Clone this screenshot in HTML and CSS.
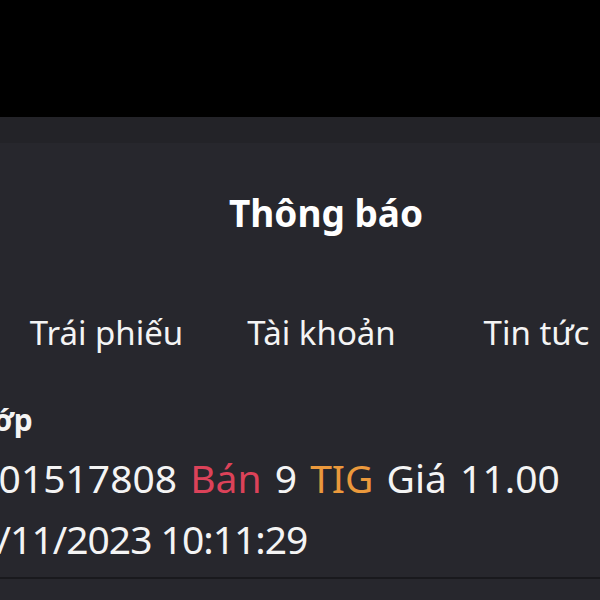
FILE: index.html
```html
<!DOCTYPE html>
<html lang="vi">
<head>
    <meta charset="UTF-8">
    <meta name="viewport" content="width=device-width, initial-scale=1.0">
    <title>Thông báo</title>
    <link rel="stylesheet" href="styles.css">
</head>
<body>

<div class="statusbar"></div>
<div class="navbar"></div>

<div class="header">
    <h2>Thông báo</h2>
</div>

<div class="tabs">
    <div class="tab">Trái phiếu</div>
    <div class="tab">Tài khoản</div>
    <div class="tab">Tin tức</div>
</div>

<div class="item">
    <div class="item-title">Khớp</div>
    <div class="item-text">0001517808 <span class="sell">Bán</span> 9 <span class="code">TIG</span> Giá 11.00</div>
    <div class="item-time">07/11/2023 10:11:29</div>
</div>

</body>
</html>
```

FILE: styles.css
```css
body {
    margin: 0;
    font-family: "Noto Sans", sans-serif;
    background-color: #27272d;
    color: #f4f4f4;
    overflow: hidden;
}
.statusbar {
    height: 117px;
    background: #000;
}
.navbar {
    height: 26px;
    background: #232328;
}
.header {
    height: 138px;
    padding-left: 52px;
    display: flex;
    align-items: center;
    justify-content: center;
}
.header h2 {
    margin: 0;
    font-size: 37px;
    font-weight: bold;
    color: #fff;
}
.tabs {
    height: 102px;
    margin-left: -1px;
    display: grid;
    grid-template-columns: 215px 215px 215px;
    align-items: center;
    white-space: nowrap;
}
.tab {
    text-align: center;
    font-size: 33px;
}
.item {
    margin-left: -46px;
    padding-top: 7px;
    padding-bottom: 5px;
    border-bottom: 2px solid #19191d;
    white-space: nowrap;
}
.item-title {
    font-size: 30px;
    font-weight: bold;
    line-height: 60px;
}
.item-text {
    font-size: 39px;
    line-height: 56px;
    word-spacing: 3px;
}
.item-time {
    font-size: 39px;
    line-height: 66px;
    letter-spacing: -1px;
}
.sell {
    color: #dc4259;
}
.code {
    color: #eb993c;
}
```
